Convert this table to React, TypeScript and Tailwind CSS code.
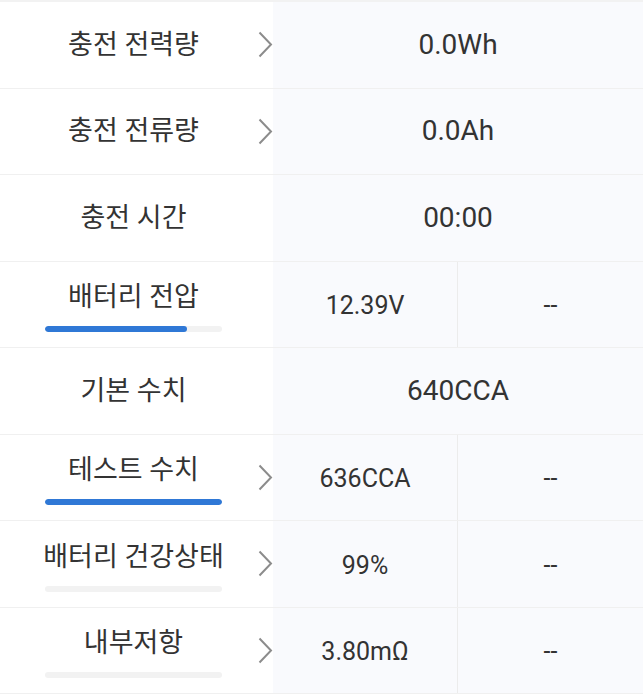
type Row = {
  label: string;
  chevron?: boolean;
  bar?: number | null; // fraction filled, null = no bar
  value?: string;
  split?: [string, string];
};

const ROWS: Row[] = [
  { label: "충전 전력량", chevron: true, value: "0.0Wh" },
  { label: "충전 전류량", chevron: true, value: "0.0Ah" },
  { label: "충전 시간", value: "00:00" },
  { label: "배터리 전압", bar: 0.8, split: ["12.39V", "--"] },
  { label: "기본 수치", value: "640CCA" },
  { label: "테스트 수치", chevron: true, bar: 1, split: ["636CCA", "--"] },
  { label: "배터리 건강상태", chevron: true, bar: 0, split: ["99%", "--"] },
  { label: "내부저항", chevron: true, bar: 0, split: ["3.80mΩ", "--"] },
];

function Chevron() {
  return (
    <svg width="15" height="27" viewBox="0 0 15 27" fill="none">
      <polyline points="1.5,1.5 13,13.5 1.5,25.5" stroke="#8c8c8c" strokeWidth="2" />
    </svg>
  );
}

export default function App() {
  return (
    <div
      className="w-[643px] bg-white text-[#333333] border-t-2 border-[#f2f2f2]"
      style={{ fontFamily: "Roboto, 'Noto Sans CJK KR', sans-serif" }}
    >
      {ROWS.map((row) => (
        <div key={row.label} className="flex h-[86.5px] border-b border-[#f0f0f0]">
          {/* label column */}
          <div className="grid w-[273px] shrink-0 grid-cols-[12px_1fr_18px] items-center bg-white">
            <div />
            <div className={row.bar != null ? "flex flex-col items-center pt-[6px]" : "flex flex-col items-center"}>
              <span className="text-[27px] leading-[30px] whitespace-nowrap">{row.label}</span>
              {row.bar != null && (
                <div className="mt-[14px] h-[6px] w-[177px] overflow-hidden rounded-full bg-[#f2f2f2]">
                  <div className="h-full rounded-full bg-[#2f78d6]" style={{ width: `${row.bar * 100}%` }} />
                </div>
              )}
            </div>
            <div className="flex items-center justify-start pl-[3px]">{row.chevron && <Chevron />}</div>
          </div>

          {/* value column */}
          {row.split ? (
            <div className="grid flex-1 grid-cols-2 bg-[#f9fafd]">
              <div className="flex items-center justify-center border-r border-[#ececec] pt-[3px] text-[25px]">
                {row.split[0]}
              </div>
              <div className="flex items-center justify-center pt-[3px] text-[25px]">{row.split[1]}</div>
            </div>
          ) : (
            <div className="flex flex-1 items-center justify-center bg-[#f9fafd] text-[28px]">{row.value}</div>
          )}
        </div>
      ))}
    </div>
  );
}
